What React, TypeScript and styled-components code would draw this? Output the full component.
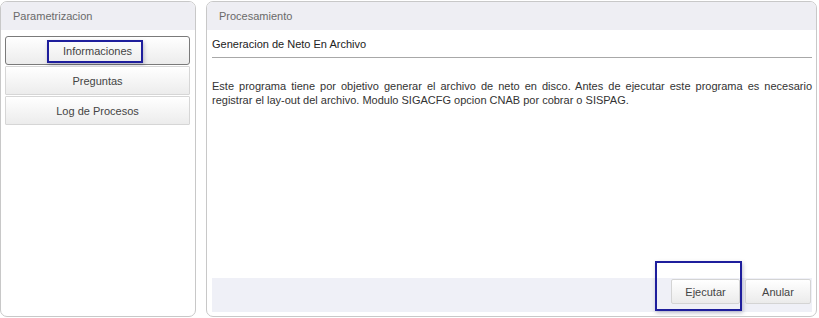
import styled, { createGlobalStyle } from 'styled-components'

const Global = createGlobalStyle`
  html, body {
    margin: 0;
    padding: 0;
    background: #ffffff;
  }
  body {
    font-family: Arial, "Liberation Sans", sans-serif;
    font-size: 11px;
    color: #333;
  }
`

const Page = styled.div`
  display: flex;
  gap: 10px;
  padding: 1px 2px 0 0;
  height: 317px;
  box-sizing: border-box;
`

const Panel = styled.section<{ $width: number }>`
  width: ${p => p.$width}px;
  height: 316px;
  box-sizing: border-box;
  border: 1px solid #c8c8c8;
  border-radius: 7px;
  background: #fff;
  display: flex;
  flex-direction: column;
  overflow: hidden;
`

const PanelHeader = styled.header`
  height: 28px;
  flex: none;
  display: flex;
  align-items: center;
  padding-left: 12px;
  background: #eeeef3;
  color: #6a6a6a;
  font-size: 11px;
`

const SideBody = styled.div`
  display: flex;
  flex-direction: column;
  gap: 1px;
  padding: 6px 5px 0 4px;
`

const SideButton = styled.button<{ $active?: boolean }>`
  position: relative;
  height: 29px;
  display: flex;
  align-items: center;
  justify-content: center;
  border: 1px solid ${p => (p.$active ? '#7a7a7a' : '#d6d6d6')};
  border-radius: ${p => (p.$active ? '3px' : '1px')};
  background: linear-gradient(#ffffff, #ececec);
  font-family: Arial, "Liberation Sans", sans-serif;
  font-size: 11px;
  color: #444;
  padding: 0;
  cursor: pointer;
`

const Highlight = styled.span<{ $l: number; $t: number; $w: number; $h: number }>`
  position: absolute;
  left: ${p => p.$l}px;
  top: ${p => p.$t}px;
  width: ${p => p.$w}px;
  height: ${p => p.$h}px;
  box-sizing: border-box;
  border: 2px solid #1e1e9c;
  box-shadow: 1px 2px 4px rgba(0, 0, 60, 0.25);
  pointer-events: none;
`

const MainBody = styled.div`
  flex: 1;
  display: flex;
  flex-direction: column;
  padding: 0 4px 4px 5px;
`

const Title = styled.h2`
  margin: 0;
  padding: 6px 0 5px;
  line-height: 16px;
  font-size: 11px;
  font-weight: normal;
  color: #222;
  border-bottom: 1px solid #a8a8a8;
`

const Description = styled.p`
  margin: 21px 0 0;
  line-height: 14px;
  text-align: justify;
  color: #333;
  flex: 1;
`

const Footer = styled.footer`
  height: 34px;
  background: #eff0f7;
  display: flex;
  justify-content: flex-end;
  align-items: flex-start;
  gap: 5px;
  padding: 1px 1px 0 0;
  box-sizing: border-box;
`

const ActionButton = styled.button<{ $width: number }>`
  position: relative;
  width: ${p => p.$width}px;
  height: 25px;
  border: 1px solid #d4d4d4;
  border-radius: 2px;
  background: linear-gradient(#ffffff, #ebebeb);
  font-family: Arial, "Liberation Sans", sans-serif;
  font-size: 11px;
  color: #444;
  padding: 0;
  cursor: pointer;
`

export default function App() {
  return (
    <>
      <Global />
      <Page>
        <Panel $width={196}>
          <PanelHeader>Parametrizacion</PanelHeader>
          <SideBody>
            <SideButton $active>
              Informaciones
              <Highlight $l={41} $t={3} $w={96} $h={23} />
            </SideButton>
            <SideButton>Preguntas</SideButton>
            <SideButton>Log de Procesos</SideButton>
          </SideBody>
        </Panel>
        <Panel $width={611}>
          <PanelHeader>Procesamiento</PanelHeader>
          <MainBody>
            <Title>Generacion de Neto En Archivo</Title>
            <Description>
              Este programa tiene por objetivo generar el archivo de neto en disco. Antes de ejecutar este
              programa es necesario registrar el lay-out del archivo. Modulo SIGACFG opcion CNAB por cobrar o
              SISPAG.
            </Description>
            <Footer>
              <ActionButton $width={69}>
                Ejecutar
                <Highlight $l={-17} $t={-19} $w={87} $h={50} />
              </ActionButton>
              <ActionButton $width={66}>Anular</ActionButton>
            </Footer>
          </MainBody>
        </Panel>
      </Page>
    </>
  )
}
